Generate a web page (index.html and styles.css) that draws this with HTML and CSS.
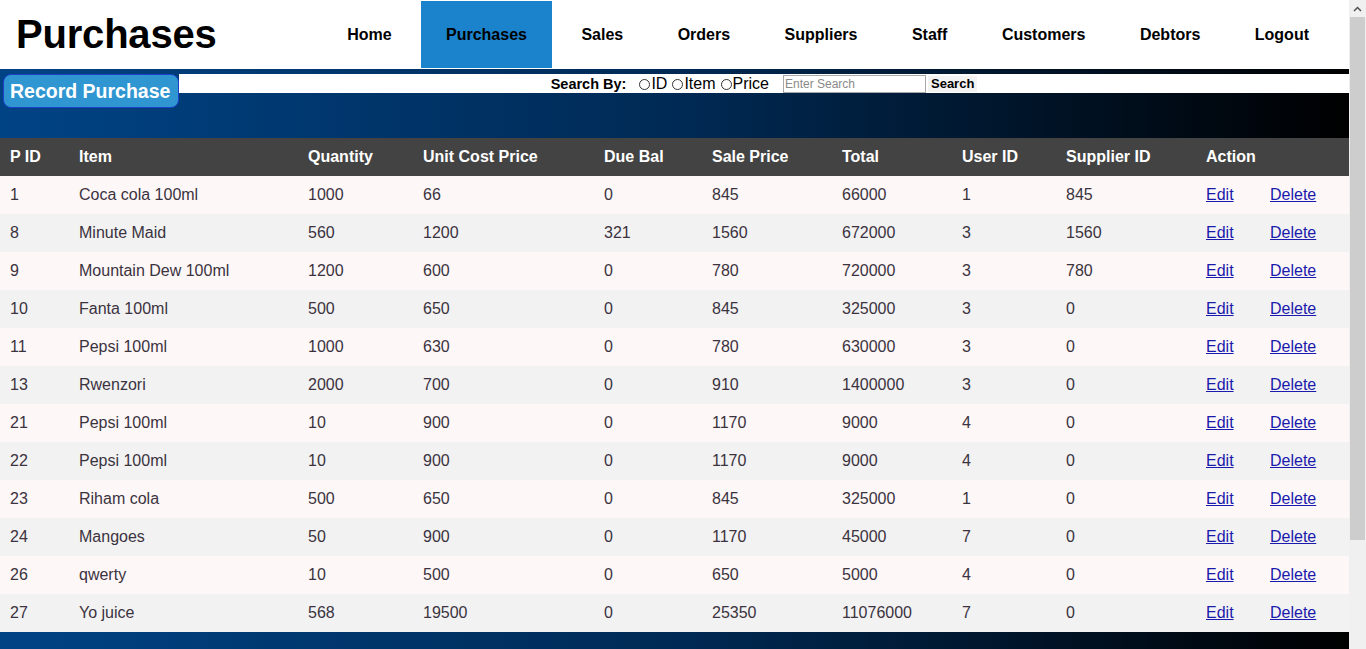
FILE: index.html
```html
<!DOCTYPE html>
<html lang="en">
<head>
<meta charset="utf-8">
<title>Purchases</title>
<link rel="stylesheet" href="styles.css">
</head>
<body>
<div class="page">
<header class="topbar">
  <h1 class="title">Purchases</h1>
  <nav class="nav">
    <a class="nav-item" href="#">Home</a>
    <a class="nav-item active" href="#">Purchases</a>
    <a class="nav-item" href="#">Sales</a>
    <a class="nav-item" href="#">Orders</a>
    <a class="nav-item" href="#">Suppliers</a>
    <a class="nav-item" href="#">Staff</a>
    <a class="nav-item" href="#">Customers</a>
    <a class="nav-item" href="#">Debtors</a>
    <a class="nav-item" href="#">Logout</a>
  </nav>
</header>

<div class="toolbar">
  <button class="record-btn" type="button">Record Purchase</button>
  <form class="search-strip">
    <span class="search-label">Search By:</span>
    <label class="opt"><input type="radio" name="by" class="radio">ID</label>
    <label class="opt"><input type="radio" name="by" class="radio">Item</label>
    <label class="opt last"><input type="radio" name="by" class="radio">Price</label>
    <input type="text" class="search-input" placeholder="Enter Search">
    <button type="button" class="search-btn">Search</button>
  </form>
</div>

<table class="grid">
  <colgroup>
    <col class="c-pid"><col class="c-item"><col class="c-qty"><col class="c-unit"><col class="c-due"><col class="c-sale"><col class="c-total"><col class="c-user"><col class="c-sup"><col class="c-edit"><col class="c-del">
  </colgroup>
  <thead>
    <tr><th>P ID</th><th>Item</th><th>Quantity</th><th>Unit Cost Price</th><th>Due Bal</th><th>Sale Price</th><th>Total</th><th>User ID</th><th>Supplier ID</th><th colspan="2">Action</th></tr>
  </thead>
  <tbody>
    <tr><td>1</td><td>Coca cola 100ml</td><td>1000</td><td>66</td><td>0</td><td>845</td><td>66000</td><td>1</td><td>845</td><td><a href="#">Edit</a></td><td><a href="#">Delete</a></td></tr>
    <tr><td>8</td><td>Minute Maid</td><td>560</td><td>1200</td><td>321</td><td>1560</td><td>672000</td><td>3</td><td>1560</td><td><a href="#">Edit</a></td><td><a href="#">Delete</a></td></tr>
    <tr><td>9</td><td>Mountain Dew 100ml</td><td>1200</td><td>600</td><td>0</td><td>780</td><td>720000</td><td>3</td><td>780</td><td><a href="#">Edit</a></td><td><a href="#">Delete</a></td></tr>
    <tr><td>10</td><td>Fanta 100ml</td><td>500</td><td>650</td><td>0</td><td>845</td><td>325000</td><td>3</td><td>0</td><td><a href="#">Edit</a></td><td><a href="#">Delete</a></td></tr>
    <tr><td>11</td><td>Pepsi 100ml</td><td>1000</td><td>630</td><td>0</td><td>780</td><td>630000</td><td>3</td><td>0</td><td><a href="#">Edit</a></td><td><a href="#">Delete</a></td></tr>
    <tr><td>13</td><td>Rwenzori</td><td>2000</td><td>700</td><td>0</td><td>910</td><td>1400000</td><td>3</td><td>0</td><td><a href="#">Edit</a></td><td><a href="#">Delete</a></td></tr>
    <tr><td>21</td><td>Pepsi 100ml</td><td>10</td><td>900</td><td>0</td><td>1170</td><td>9000</td><td>4</td><td>0</td><td><a href="#">Edit</a></td><td><a href="#">Delete</a></td></tr>
    <tr><td>22</td><td>Pepsi 100ml</td><td>10</td><td>900</td><td>0</td><td>1170</td><td>9000</td><td>4</td><td>0</td><td><a href="#">Edit</a></td><td><a href="#">Delete</a></td></tr>
    <tr><td>23</td><td>Riham cola</td><td>500</td><td>650</td><td>0</td><td>845</td><td>325000</td><td>1</td><td>0</td><td><a href="#">Edit</a></td><td><a href="#">Delete</a></td></tr>
    <tr><td>24</td><td>Mangoes</td><td>50</td><td>900</td><td>0</td><td>1170</td><td>45000</td><td>7</td><td>0</td><td><a href="#">Edit</a></td><td><a href="#">Delete</a></td></tr>
    <tr><td>26</td><td>qwerty</td><td>10</td><td>500</td><td>0</td><td>650</td><td>5000</td><td>4</td><td>0</td><td><a href="#">Edit</a></td><td><a href="#">Delete</a></td></tr>
    <tr><td>27</td><td>Yo juice</td><td>568</td><td>19500</td><td>0</td><td>25350</td><td>11076000</td><td>7</td><td>0</td><td><a href="#">Edit</a></td><td><a href="#">Delete</a></td></tr>
  </tbody>
</table>
<div class="page-end"></div>
</div>

<div class="scrollbar" aria-hidden="true">
  <div class="sb-arrow">
    <svg width="9" height="6" viewBox="0 0 9 6"><path d="M1 5 L4.5 1.5 L8 5" fill="none" stroke="#505050" stroke-width="1.5"/></svg>
  </div>
  <div class="sb-thumb"></div>
</div>
</body>
</html>
```

FILE: styles.css
```css
html, body {
  margin: 0;
  background: #f0f0f0;
}
body {
  font-family: "Liberation Sans", Arial, sans-serif;
  color: #000;
}
.page {
  width: 1349px;
  min-height: 100vh;
  background: linear-gradient(to right, #004385 0%, #002a55 50%, #000000 100%);
}

.scrollbar {
  position: fixed;
  top: 0;
  right: 0;
  width: 17px;
  height: 100vh;
  background: #f0f0f0;
  display: flex;
  flex-direction: column;
  align-items: center;
}
.sb-arrow {
  flex: none;
  height: 17px;
  width: 17px;
  display: flex;
  align-items: center;
  justify-content: center;
}
.sb-thumb {
  flex: none;
  width: 15px;
  height: 523px;
  background: #cdcdcd;
}

.topbar {
  display: flex;
  align-items: flex-start;
  justify-content: space-between;
  height: 69px;
  background: #fff;
}
.title {
  margin: 0;
  padding-left: 16px;
  font-size: 40px;
  font-weight: bold;
  line-height: 68px;
  letter-spacing: -0.2px;
}
.nav {
  display: flex;
  gap: 4.45px;
  margin-top: 1px;
  margin-right: 15px;
}
.nav-item {
  display: block;
  padding: 0 25px;
  height: 67px;
  line-height: 68px;
  font-size: 16px;
  font-weight: bold;
  color: #000;
  text-decoration: none;
}
.nav-item.active {
  background: #1a83cc;
}

.toolbar {
  display: flex;
  align-items: flex-start;
  margin-top: 5px;
}
.record-btn {
  margin-left: 3px;
  width: 176px;
  height: 34px;
  padding: 1px 0 0 6px;
  text-align: left;
  background: #2f96d1;
  border: 1px solid #1e3fc8;
  border-radius: 8px;
  color: #fff;
  font-family: "Liberation Sans", Arial, sans-serif;
  font-size: 19.5px;
  font-weight: bold;
  line-height: 31px;
}
.search-strip {
  flex: 1;
  box-sizing: border-box;
  height: 19px;
  padding-top: 1px;
  margin: 0;
  background: #fff;
  display: flex;
  justify-content: center;
  align-items: center;
}
.search-label {
  font-size: 14.5px;
  font-weight: bold;
  margin-right: 13px;
}
.opt {
  display: flex;
  align-items: center;
  font-size: 16px;
  margin-right: 5px;
}
.opt.last { margin-right: 14px; }
.radio {
  appearance: none;
  -webkit-appearance: none;
  box-sizing: border-box;
  width: 11px;
  height: 11px;
  margin: 0 1px 0 0;
  border: 1px solid #333;
  border-radius: 50%;
  background: #fff;
}
.search-input {
  box-sizing: border-box;
  width: 143px;
  height: 18px;
  margin: 0;
  padding: 0 1px;
  border: 1px solid #a9a9a9;
  font-family: "Liberation Sans", Arial, sans-serif;
  font-size: 12px;
}
.search-input::placeholder { color: #8a8a8a; }
.search-btn {
  margin-left: 2px;
  height: 16px;
  padding: 0 3px;
  border: none;
  background: #f3f3f3;
  font-family: "Liberation Sans", Arial, sans-serif;
  font-size: 13px;
  font-weight: bold;
  line-height: 16px;
  color: #000;
}

.grid {
  width: 1349px;
  margin-top: 30px;
  border-collapse: collapse;
  table-layout: fixed;
  font-size: 16px;
}
.c-pid { width: 69px; }
.c-item { width: 229px; }
.c-qty { width: 115px; }
.c-unit { width: 181px; }
.c-due { width: 108px; }
.c-sale { width: 130px; }
.c-total { width: 120px; }
.c-user { width: 104px; }
.c-sup { width: 140px; }
.c-edit { width: 64px; }
.c-del { width: 89px; }
.grid th {
  height: 38px;
  padding: 0 10px;
  background: #434343;
  color: #fff;
  font-weight: bold;
  text-align: left;
}
.grid td {
  height: 38px;
  padding: 0 10px;
  color: #3b3340;
  text-align: left;
}
.grid tbody tr:nth-child(odd) { background: #fdf7f7; }
.grid tbody tr:nth-child(even) { background: #f2f2f2; }
.grid a { color: #1a1aac; text-decoration: underline; }
.page-end { height: 131px; }
```
